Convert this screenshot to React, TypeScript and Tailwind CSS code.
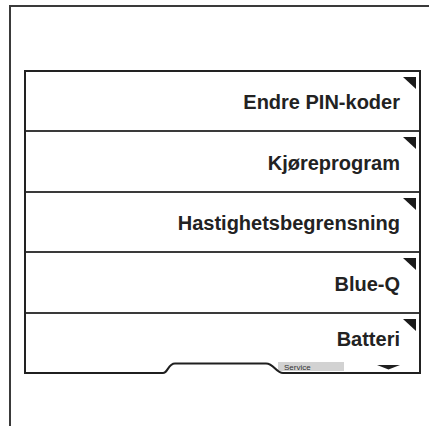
const rows = [
  { label: "Endre PIN-koder", h: "h-[60px]" },
  { label: "Kjøreprogram", h: "h-[61px]" },
  { label: "Hastighetsbegrensning", h: "h-[60px]" },
  { label: "Blue-Q", h: "h-[61px]" },
];

function Corner() {
  return (
    <svg
      className="absolute right-[3px] top-[5px]"
      width="13"
      height="12"
      viewBox="0 0 13 12"
    >
      <polygon points="0,0 13,0 13,12" fill="#1a1a1a" />
    </svg>
  );
}

function BottomEdge() {
  return (
    <svg width="393" height="14" viewBox="0 0 393 14" className="block">
      <rect x="252" y="2" width="66" height="9" fill="#d2d2d2" />
      <text
        x="258"
        y="9.5"
        fontSize="8"
        fill="#333"
        fontFamily="'Liberation Sans', Arial, sans-serif"
      >
        Service
      </text>
      <path
        d="M0 13 H137 C142 13 142 3.5 149 3.5 H240 C248 3.5 250 13 257 13 H393"
        fill="none"
        stroke="#1f1f1f"
        strokeWidth="2"
      />
      <polygon points="351,5 374,5 362.5,9.5" fill="#1f1f1f" />
    </svg>
  );
}

export default function App() {
  return (
    <div
      className="w-[429px] h-[426px] bg-white overflow-hidden pt-[5px] pl-[9px]"
      style={{ fontFamily: "'Liberation Sans', Arial, sans-serif" }}
    >
      <div className="h-[421px] border-l-2 border-t-2 border-[#3a3a3a] pt-[63px] pl-[13px]">
        <div className="w-[397px] border-x-2 border-t-2 border-[#222]">
          {rows.map((r) => (
            <div
              key={r.label}
              className={`relative ${r.h} border-b-2 border-[#3a3a3a] flex items-center justify-end pr-[19px] pt-[2px]`}
            >
              <Corner />
              <span className="text-[20px] leading-none font-bold text-[#222]">{r.label}</span>
            </div>
          ))}
          <div className="relative h-[60px] flex flex-col">
            <Corner />
            <div className="flex-1 flex items-center justify-end pr-[19px] pt-[4px]">
              <span className="text-[20px] leading-none font-bold text-[#222]">Batteri</span>
            </div>
            <BottomEdge />
          </div>
        </div>
      </div>
    </div>
  );
}
